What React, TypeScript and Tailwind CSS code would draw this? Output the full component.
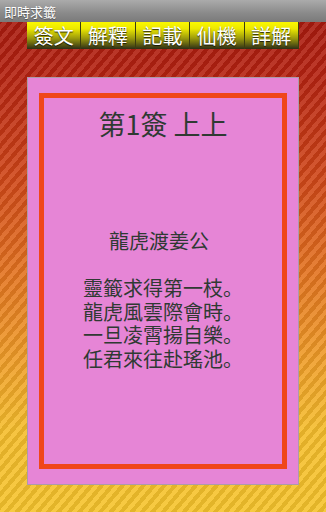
const tabs = ["簽文", "解釋", "記載", "仙機", "詳解"];

const poem = ["靈籤求得第一枝。", "龍虎風雲際會時。", "一旦凌霄揚自樂。", "任君來往赴瑤池。"];

export default function App() {
  return (
    <div
      className="w-[326px] h-[512px] overflow-hidden flex flex-col bg-[repeating-linear-gradient(130deg,rgba(255,255,255,0.1)_0px,rgba(255,255,255,0.1)_4px,rgba(0,0,0,0.08)_4px,rgba(0,0,0,0.08)_8px),linear-gradient(to_bottom,#a3170e_0%,#b52211_14%,#cf4518_34%,#e2701f_52%,#ef9c28_70%,#f5bd2c_84%,#f6c42c_100%)]"
      style={{ fontFamily: '"Noto Sans CJK SC", "Noto Sans", sans-serif' }}
    >
      {/* title bar */}
      <div className="h-[22px] shrink-0 bg-[linear-gradient(to_bottom,#ababab,#8a8a8a_60%,#7a7a7a)] px-[4px] flex items-center">
        <span className="text-[13px] leading-none text-white [text-shadow:0_1px_1px_rgba(0,0,0,0.4)]">即時求籤</span>
      </div>

      {/* tabs */}
      <div className="px-[27px] flex">
        {tabs.map((t) => (
          <div
            key={t}
            className="w-[54.4px] h-[27px] flex items-center justify-center border-r border-[#3c3c10] bg-[linear-gradient(to_bottom,#fbf800_0%,#ece800_25%,#9c9a0c_60%,#2e2e16_100%)] text-white text-[20px] leading-none [text-shadow:0_1px_1px_rgba(0,0,0,0.8)]"
          >
            {t}
          </div>
        ))}
      </div>

      {/* card */}
      <div className="mt-[28px] ml-[27px] w-[272px] h-[408px] border border-[#ad9aaa] bg-[#e685d6] px-[11px] py-[15px]">
        <div className="h-full border-[5px] border-[#f0461a] flex flex-col items-center text-[#2f3a33]">
          <div className="mt-[10px] text-[27px] leading-[32px]">第1簽 上上</div>
          <div className="mt-[89px] text-[20px] leading-[23.5px] text-center">
            <div className="pr-[8px]">龍虎渡姜公</div>
            <div className="h-[23.5px]" />
            {poem.map((l) => (
              <div key={l}>{l}</div>
            ))}
          </div>
        </div>
      </div>
    </div>
  );
}
